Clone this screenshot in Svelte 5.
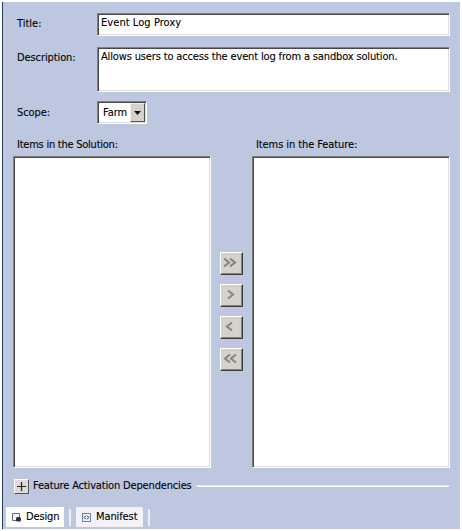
<script>
  const moves = [
    { name: 'Add all', paths: ['M2 4.5 L7 8.5 L2 12.5', 'M8 4.5 L13 8.5 L8 12.5'] },
    { name: 'Add', paths: ['M6 4.5 L11 8.5 L6 12.5'] },
    { name: 'Remove', paths: ['M10 4.5 L5 8.5 L10 12.5'] },
    { name: 'Remove all', paths: ['M8 4.5 L3 8.5 L8 12.5', 'M14 4.5 L9 8.5 L14 12.5'] }
  ];
</script>

<main class="designer">
  <div class="row title">
    <span class="label">Title:</span>
    <div class="field"><span class="t-title">Event Log Proxy</span></div>
  </div>
  <div class="row desc">
    <span class="label t-label">Description:</span>
    <div class="field"><span class="t-desc">Allows users to access the event log from a sandbox solution.</span></div>
  </div>
  <div class="row scope">
    <span class="label t-label">Scope:</span>
    <div class="field select">
      <span class="t-farm">Farm</span>
      <span class="arrow"><svg width="7" height="4" viewBox="0 0 7 4"><path d="M0 0H7L3.5 4Z" fill="#111" /></svg></span>
    </div>
  </div>

  <div class="lists">
    <section>
      <h2 class="t-sol">Items in the Solution:</h2>
      <div class="field list"></div>
    </section>
    <div class="moves">
      {#each moves as move}
        <button aria-label={move.name}>
          <svg width="19" height="19" viewBox="0 0 19 19">
            {#each move.paths as d}
              <path {d} fill="none" stroke="#858585" stroke-width="2.1" />
            {/each}
          </svg>
        </button>
      {/each}
    </div>
    <section>
      <h2 class="t-feat">Items in the Feature:</h2>
      <div class="field list"></div>
    </section>
  </div>

  <div class="deps">
    <span class="plus"><svg width="11" height="11" viewBox="0 0 11 11"><path d="M1 5.5H10M5.5 1V10" stroke="#222" stroke-width="1.2" /></svg></span>
    <span class="t-deps">Feature Activation Dependencies</span>
    <i></i>
  </div>

  <nav>
    <div class="tab design">
      <svg width="10" height="10" viewBox="0 0 10 10">
        <path d="M.5 1.5H7.5V8.5H.5Z" fill="#f4f6fc" stroke="#5d6b92" />
        <rect x="4" y="5" width="5" height="4.6" rx="1.6" fill="#2b3040" />
      </svg>
      <span class="t-design">Design</span>
    </div>
    <i></i>
    <div class="tab manifest">
      <svg width="9" height="9" viewBox="0 0 9 9">
        <rect x=".5" y=".5" width="8" height="8" fill="#e8f0ff" stroke="#6f86b5" />
        <path d="M3.8 2.8L2.2 4.5L3.8 6.2M5.2 2.8L6.8 4.5L5.2 6.2" fill="none" stroke="#222c4c" />
      </svg>
      <span class="t-manifest">Manifest</span>
    </div>
    <i></i>
  </nav>
</main>

<style>
  :global(body) { background: #fff; }
  .designer {
    box-sizing: border-box;
    width: 458px;
    height: 527px;
    margin: 2px 0 0 2px;
    padding: 11px 10px 0 10px;
    border-left: 1px solid #243a66;
    background: #bdc7df;
    color: #000;
    font: 11px/14px "DejaVu Sans Condensed", "DejaVu Sans", sans-serif;
    -webkit-text-stroke: 0.1px #000;
    white-space: nowrap;
    overflow: hidden;
  }
  :global(#app) { display: flow-root; }
  .t-title { letter-spacing: 0.06px; }
  .t-label { letter-spacing: -0.1px; }
  .t-desc { letter-spacing: -0.15px; }
  .t-sol { letter-spacing: -0.24px; }
  .t-feat { letter-spacing: -0.09px; }
  .t-deps { letter-spacing: -0.16px; }
  .t-design { letter-spacing: -0.15px; }
  .t-manifest { letter-spacing: -0.1px; }
  .row { display: flex; padding-left: 4px; }
  .label { width: 80px; padding-top: 4px; }
  .scope .label { padding-top: 5px; }
  .field {
    box-sizing: border-box;
    background: #fff;
    border: 1px solid;
    border-color: #808080 #fff #fff #808080;
    box-shadow: inset 1px 1px #484848, inset -1px -1px #dedcd3;
  }
  .row .field { width: 353px; padding: 2px 3px; }
  .title { height: 34px; }
  .title .field { height: 23px; }
  .desc { height: 54px; }
  .desc .field { height: 45px; }
  .row .select { display: flex; width: 50px; height: 23px; padding: 4px 1px 1px 5px; justify-content: space-between; }
  .arrow {
    box-sizing: border-box;
    display: flex;
    align-items: center;
    justify-content: center;
    width: 15px;
    height: 19px;
    margin-top: -3px;
    background: #d5d2ca;
    border: 1px solid;
    border-color: #eee #555 #555 #eee;
  }
  .scope { height: 36px; }
  .lists { display: flex; }
  section { width: 198px; }
  h2 { margin: 0; padding: 1px 0 4px 4px; font: inherit; }
  .list { height: 312px; }
  .moves { display: flex; flex-direction: column; gap: 9px; width: 41px; padding: 115px 0 0 9px; box-sizing: border-box; }
  button {
    box-sizing: border-box;
    width: 23px;
    height: 23px;
    padding: 1px;
    border: 1px solid;
    border-color: #fff #404040 #404040 #fff;
    box-shadow: inset -1px -1px #85827d;
    background: #d5d2ca;
  }
  button svg { display: block; }
  .deps { display: flex; align-items: center; height: 16px; margin-top: 10px; padding-left: 1px; }
  .deps i { flex: 1; height: 2px; margin-left: 5px; margin-right: 1px; background: #e8e9ef; border-bottom: 1px solid #fff; box-sizing: border-box; }
  .plus {
    box-sizing: border-box;
    display: flex;
    align-items: center;
    justify-content: center;
    width: 15px;
    height: 15px;
    margin-right: 4px;
    background: #dddbd5;
    border: 1px solid;
    border-color: #fff #555 #555 #fff;
  }
  nav { display: flex; align-items: center; height: 20px; margin: 13px 0 0 -7px; }
  nav i { width: 2px; height: 17px; margin: 0 5px; background: #eeeef6; }
  .tab { box-sizing: border-box; display: flex; align-items: center; height: 20px; padding-left: 6px; gap: 4px; border-radius: 1px; }
  .manifest { gap: 5px; }
  .design { width: 58px; background: #fff; }
  .manifest { width: 67px; background: #f4f1f8; }
</style>
